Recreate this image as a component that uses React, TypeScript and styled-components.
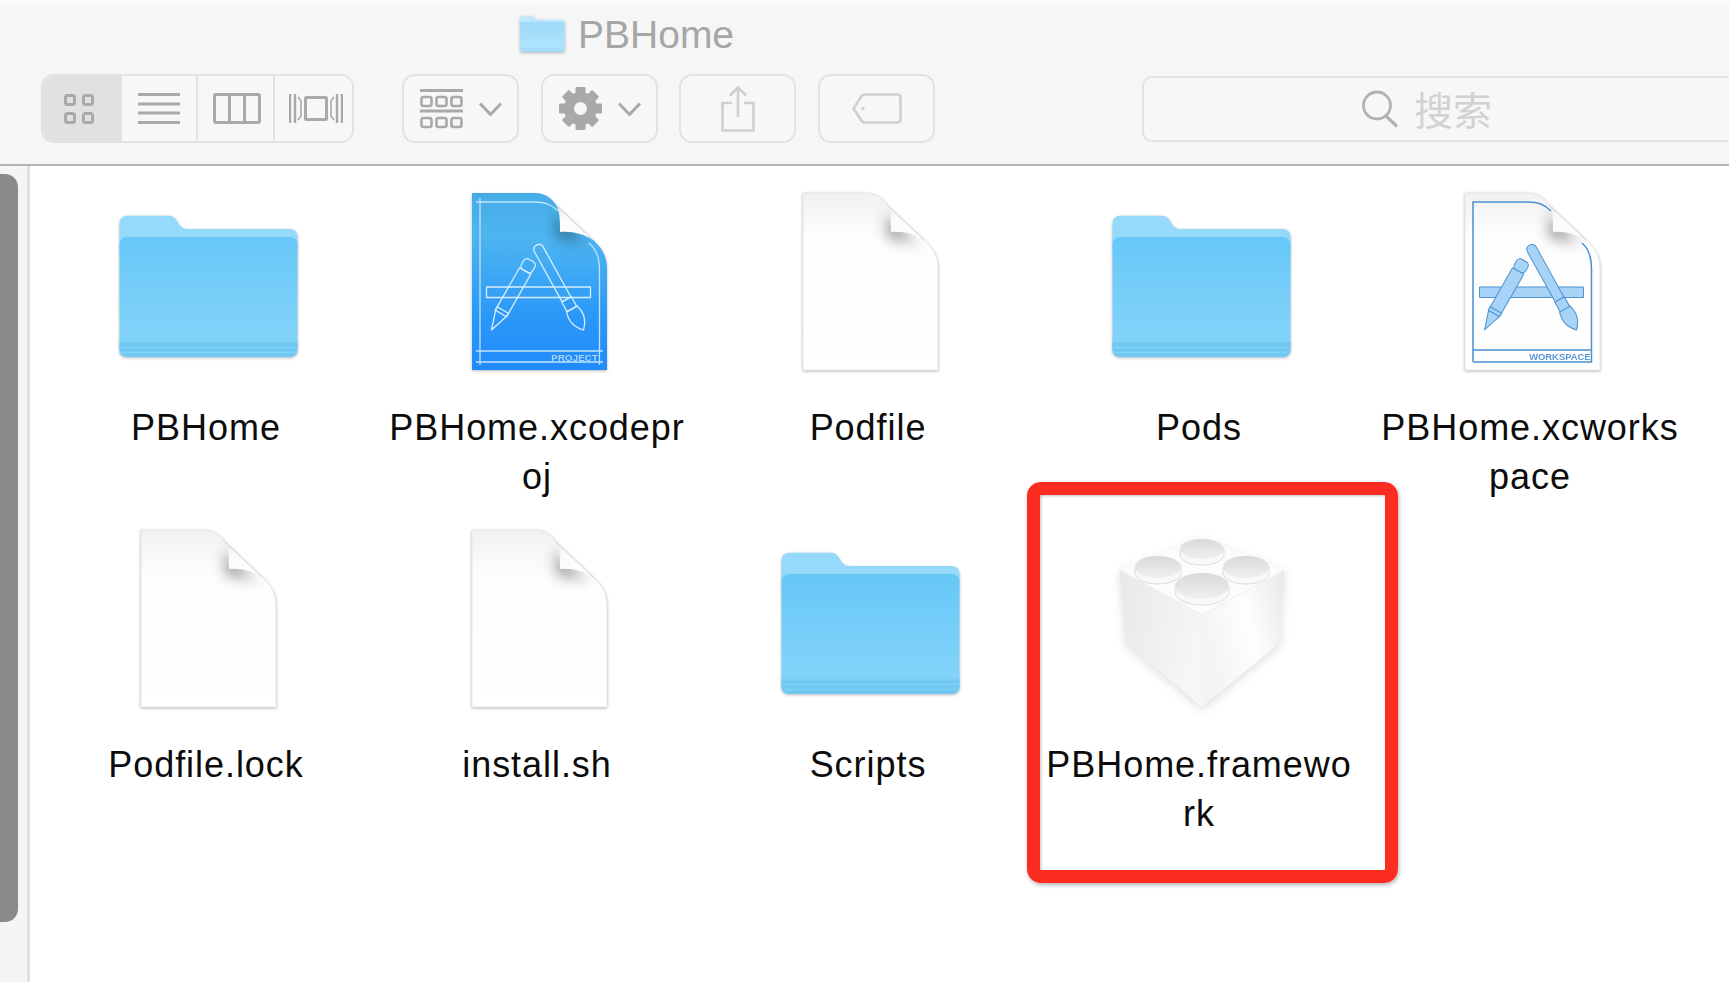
import React from "react";
import styled, { createGlobalStyle } from "styled-components";

const Global = createGlobalStyle`
  html, body { margin: 0; padding: 0; background: #fff; overflow: hidden; }
  * { box-sizing: border-box; }
`;

const Page = styled.div`
  width: 1729px;
  height: 982px;
  display: flex;
  flex-direction: column;
  overflow: hidden;
  font-family: "Liberation Sans", "Noto Sans CJK SC", sans-serif;
  background: #fff;
`;
const Toolbar = styled.header`
  height: 166px;
  flex: none;
  background: #f6f6f6;
  border-top: 3px solid #fbfbfb;
  border-bottom: 2px solid #b4b4b4;
  overflow: hidden;
`;
const TitleRow = styled.div`
  height: 71px;
  display: flex;
  align-items: center;
  gap: 13px;
  padding-left: 520px;
  padding-bottom: 10px;
`;
const Title = styled.div`
  font-size: 39px;
  padding-top: 2px;
  color: #a6a6a6;
`;
const Tools = styled.div`
  display: flex;
  align-items: center;
  padding-left: 41px;
  height: 69px;
`;
const Segmented = styled.div`
  display: flex;
  flex: none;
  width: 313px;
  height: 69px;
  border: 2px solid #e2e2e2;
  border-radius: 13px;
  overflow: hidden;
  margin-right: 48px;
`;
const Segment = styled.div<{ $active?: boolean; $before?: number; $after?: number }>`
  flex: 1 1 0;
  display: flex;
  align-items: center;
  justify-content: center;
  padding-left: ${(p) => p.$before ?? 0}px;
  padding-right: ${(p) => p.$after ?? 0}px;
  background: ${(p) => (p.$active ? "#e1e1e1" : "#f7f7f7")};
  border-right: 2px solid #e2e2e2;
  &:last-child { border-right: none; }
`;
const ToolButton = styled.div<{ $width: number; $gap: number }>`
  width: ${(p) => p.$width}px;
  height: 69px;
  margin-right: ${(p) => p.$gap}px;
  flex: none;
  display: flex;
  align-items: center;
  justify-content: center;
  gap: 16px;
  background: #f7f7f7;
  border: 2px solid #e2e2e2;
  border-radius: 13px;
`;
const SearchField = styled.div`
  flex: none;
  width: 760px;
  height: 66px;
  display: flex;
  align-items: center;
  gap: 14px;
  padding-left: 217px;
  background: #f7f7f7;
  border: 2px solid #e2e2e2;
  border-radius: 10px;
`;
const SearchText = styled.span`
  font-size: 39px;
  line-height: 1;
  color: #d2d2d2;
  font-family: "Noto Sans CJK SC", sans-serif;
`;
const Body = styled.main`
  flex: 1;
  display: flex;
  min-height: 0;
`;
const ScrollTrack = styled.div`
  width: 30px;
  flex: none;
  padding-top: 8px;
  background: #f5f5f5;
  border-right: 3px solid #e0e0e0;
`;
const ScrollThumb = styled.div`
  width: 18px;
  height: 748px;
  background: #8a8a8a;
  border-radius: 0 13px 13px 0;
`;
const Grid = styled.div`
  display: grid;
  grid-template-columns: repeat(5, 331px);
  grid-auto-rows: 337px;
  padding: 27px 0 0 10.5px;
`;
const Cell = styled.div`
  position: relative;
  display: flex;
  flex-direction: column;
  align-items: center;
`;
const IconBox = styled.div`
  width: 180px;
  height: 180px;
  margin-left: 5px;
  flex: none;
  & > svg { display: block; }
`;
const Label = styled.div`
  width: 310px;
  margin-top: 31px;
  font-size: 36px;
  line-height: 48.5px;
  letter-spacing: 0.95px;
  text-align: center;
  color: #0c0c0c;
  word-break: break-all;
`;
const Annotation = styled.div`
  position: absolute;
  left: -6.5px;
  top: -48px;
  width: 371px;
  height: 401px;
  border: 13px solid #fb2c20;
  border-radius: 14px;
  box-shadow: 1px 2px 4px rgba(0, 0, 0, 0.3), inset 1px 1px 3px rgba(0, 0, 0, 0.25);
  pointer-events: none;
`;
const Shadowed = styled.svg`
  overflow: visible;
  filter: drop-shadow(0 1.5px 1.5px rgba(0, 0, 0, 0.28));
`;
const Soft = styled.svg`
  overflow: visible;
  filter: drop-shadow(0 3px 5px rgba(0, 0, 0, 0.13));
`;

const G = "#a9a9a9";

const Folder: React.FC<{ w?: number; h?: number; pale?: boolean }> = ({ w = 180, h = 180, pale }) => {
  const id = pale ? "fp" : "fm";
  return (
    <Shadowed width={w} height={h} viewBox={pale ? "0 22 180 143" : "0 0 180 180"}>
      <defs>
        <linearGradient id={id} x1="0" y1="0" x2="0" y2="1">
          <stop offset="0" stopColor={pale ? "#9edafa" : "#66c7f7"} />
          <stop offset="0.8" stopColor={pale ? "#ade2fc" : "#82d3fa"} />
          <stop offset="1" stopColor={pale ? "#ade2fc" : "#7bd0f8"} />
        </linearGradient>
      </defs>
      <path d="M0.5 31 Q0.5 22.7 9 22.7 H50 Q55 22.7 58 28 Q62 36 68 36 H170 Q178.5 36 178.5 44 V62 H0.5 Z" fill={pale ? "#c0e9fd" : "#95dafb"} />
      <path d="M0.5 52 Q0.5 44 9 44 H170 Q178.5 44 178.5 52 V156 Q178.5 164 170 164 H9 Q0.5 164 0.5 156 Z" fill={`url(#${id})`} />
      <path d="M0.5 149 H178.5 V156 Q178.5 164 170 164 H9 Q0.5 164 0.5 156 Z" fill={pale ? "#a5dcf8" : "#70c8f3"} />
      <path d="M0.5 149 H178.5 M0.5 154.5 H178.5 M0.5 159.5 H178.5" stroke={pale ? "#b4e3fb" : "#82d1f6"} strokeWidth="1.2" />
    </Shadowed>
  );
};

const PAGE = "M22 0 H84 C96 0 102 6 106 12 L143 47 C152 55 157 63 157 76 V177 H22 Z";
const FLAP = "M106 12 C110 18 110 28 110 39 C122 38 134 41 143 47 Z";

const AppTool: React.FC<{ fill: string; stroke: string; sw: number }> = ({ fill, stroke, sw }) => (
  <g fill={fill} stroke={stroke} strokeWidth={sw} strokeLinejoin="round">
    <rect x="36.5" y="94" width="104" height="10.5" />
    <g transform="translate(41.5 137) rotate(29.7)">
      <path d="M0 0 L-6.5 -20 V-68 H6.5 V-20 Z" />
      <rect x="-6.5" y="-23" width="13" height="4" />
      <rect x="-6.5" y="-80" width="13" height="12" rx="4" />
    </g>
    <g transform="translate(133.5 137) rotate(-29)">
      <path d="M0 0 C-7 -7 -9 -15 -6 -24 H6 C9 -15 7 -7 0 0 Z" />
      <rect x="-5.5" y="-35" width="11" height="11" />
      <path d="M-5 -35 V-92 Q-5 -97 0 -97 Q5 -97 5 -92 V-35 Z" />
    </g>
  </g>
);

const Curl: React.FC<{ id: string; strength: number }> = ({ id, strength }) => (
  <>
    <defs>
      <clipPath id={`${id}c`}><path d={PAGE} /></clipPath>
      <filter id={`${id}b`} x="-60%" y="-60%" width="220%" height="220%">
        <feGaussianBlur stdDeviation="7" />
      </filter>
      <linearGradient id={`${id}g`} x1="0" y1="0" x2="1" y2="1">
        <stop offset="0" stopColor="#e6e6e6" />
        <stop offset="0.3" stopColor="#fbfbfb" />
        <stop offset="1" stopColor="#ffffff" />
      </linearGradient>
    </defs>
    <g clipPath={`url(#${id}c)`}>
      <path d={FLAP} transform="translate(-3 7)" fill="#000" opacity={strength} filter={`url(#${id}b)`} />
    </g>
    <path d={FLAP} fill={`url(#${id}g)`} />
    <path d="M106 12 L143 47" stroke="#d2d2d2" strokeWidth="0.9" fill="none" />
  </>
);

const BlankFill: React.FC = () => (
  <defs>
    <linearGradient id="paper" x1="0" y1="0" x2="0" y2="1">
      <stop offset="0" stopColor="#f1f1f1" />
      <stop offset="0.25" stopColor="#fdfdfd" />
      <stop offset="1" stopColor="#ffffff" />
    </linearGradient>
  </defs>
);

const BlankDoc: React.FC = () => (
  <Shadowed width={180} height={180} viewBox="0 0 180 180">
    <BlankFill />
    <path d={PAGE} fill="url(#paper)" stroke="#e4e4e4" strokeWidth="0.8" />
    <Curl id="curlBlank" strength={0.42} />
  </Shadowed>
);

const ProjectDoc: React.FC = () => (
  <Shadowed width={180} height={180} viewBox="0 0 180 180">
    <defs>
      <linearGradient id="proj" x1="0" y1="0" x2="0" y2="1">
        <stop offset="0" stopColor="#46ace8" />
        <stop offset="0.25" stopColor="#4db5f0" />
        <stop offset="0.7" stopColor="#2b98f8" />
        <stop offset="1" stopColor="#218afb" />
      </linearGradient>
    </defs>
    <path d={PAGE} fill="url(#proj)" />
    <Curl id="curlProj" strength={0.4} />
    <g fill="none" stroke="#bfe3fb" strokeWidth="1.3">
      <path d="M30 172 V5 M26 9 H84 C96 9 102 12 108 18 M139 50 C145 55 149.5 63 149.5 76 V172 M26 169 H153 M26 158 H153" />
      <AppTool fill="none" stroke="#d6eefd" sw={1.3} />
    </g>
    <text x="148" y="168" textAnchor="end" fontSize="9.6" letterSpacing="0.2" fontFamily="Liberation Sans, sans-serif" fontWeight="700" fill="#a5d6f9">PROJECT</text>
  </Shadowed>
);

const WorkspaceDoc: React.FC = () => (
  <Shadowed width={180} height={180} viewBox="0 0 180 180">
    <BlankFill />
    <path d={PAGE} fill="url(#paper)" stroke="#e4e4e4" strokeWidth="0.8" />
    <Curl id="curlWork" strength={0.42} />
    <g fill="none" stroke="#4a8fcb" strokeWidth="1.5">
      <path d="M30 169 V9 H84 C96 9 102 12 108 18 M139 50 C145 55 148.5 63 148.5 76 V169 H30 M30 157 H148.5" />
    </g>
    <AppTool fill="#a6d3f6" stroke="#4d93d0" sw={1} />
    <text x="147.5" y="167" textAnchor="end" fontSize="9.4" fontFamily="Liberation Sans, sans-serif" fontWeight="700" fill="#5a9ad2">WORKSPACE</text>
  </Shadowed>
);

const Stud: React.FC<{ cx: number; cy: number; rx: number; ry: number }> = ({ cx, cy, rx, ry }) => (
  <g>
    <path d={`M${cx - rx} ${cy} V${cy + 6} A${rx} ${ry} 0 0 0 ${cx + rx} ${cy + 6} V${cy} Z`} fill="#f8f8f8" stroke="#d8d8d8" strokeWidth="0.9" />
    <ellipse cx={cx} cy={cy} rx={rx} ry={ry} fill="url(#stud)" />
  </g>
);

const Lego: React.FC = () => (
  <Soft width={180} height={180} viewBox="0 0 180 180">
    <defs>
      <linearGradient id="legoL" x1="0" y1="0" x2="1" y2="0.4">
        <stop offset="0" stopColor="#e8e8e8" />
        <stop offset="1" stopColor="#f6f6f6" />
      </linearGradient>
      <linearGradient id="legoR" x1="0" y1="0.4" x2="1" y2="0">
        <stop offset="0" stopColor="#f4f4f4" />
        <stop offset="0.5" stopColor="#fefefe" />
        <stop offset="1" stopColor="#e8e8e8" />
      </linearGradient>
      <linearGradient id="stud" x1="0" y1="0" x2="0" y2="1">
        <stop offset="0" stopColor="#d9d9d9" />
        <stop offset="1" stopColor="#f0f0f0" />
      </linearGradient>
    </defs>
    <path d="M7.5 40 L90 85 V177 L14 113 Z" fill="url(#legoL)" />
    <path d="M172.5 40 L90 85 V177 L167.5 113 Z" fill="url(#legoR)" />
    <path d="M7.5 40 L90 8 L172.5 40 L90 85 Z" fill="#fcfcfc" />
    <path d="M7.5 40 L90 85 L172.5 40" fill="none" stroke="#eeeeee" strokeWidth="0.8" />
    <Stud cx={90} cy={19} rx={22} ry={10} />
    <Stud cx={46} cy={37} rx={23} ry={11} />
    <Stud cx={134} cy={37} rx={23} ry={11} />
    <Stud cx={90} cy={56} rx={27} ry={13} />
  </Soft>
);

const GridViewIcon = () => (
  <svg width="30" height="30" viewBox="0 0 30 30" fill="none" stroke={G} strokeWidth="3">
    <rect x="1.5" y="1.5" width="9" height="9" rx="2" />
    <rect x="19.5" y="1.5" width="9" height="9" rx="2" />
    <rect x="1.5" y="19.5" width="9" height="9" rx="2" />
    <rect x="19.5" y="19.5" width="9" height="9" rx="2" />
  </svg>
);
const ListIcon = () => (
  <svg width="42" height="31" viewBox="0 0 42 31" stroke={G} strokeWidth="3">
    <path d="M0 1.5 H42 M0 11 H42 M0 20 H42 M0 29.5 H42" />
  </svg>
);
const ColumnsIcon = () => (
  <svg width="48" height="31" viewBox="0 0 48 31" fill="none" stroke={G} strokeWidth="3">
    <rect x="1.5" y="1.5" width="45" height="28" rx="1.5" />
    <path d="M16.5 1.5 V29.5 M31.5 1.5 V29.5" />
  </svg>
);
const CoverIcon = () => (
  <svg width="54" height="31" viewBox="0 0 54 31" fill="none" stroke={G} strokeWidth="2.4">
    <path d="M1 1 V30 M6 1 V30 M48 1 V30 M53 1 V30" />
    <path d="M9 4 L12 8 V23 L9 27 M45 4 L42 8 V23 L45 27" strokeWidth="1.6" />
    <rect x="16.5" y="4.5" width="21" height="22" rx="1" strokeWidth="3" />
  </svg>
);
const ArrangeIcon = () => (
  <svg width="43" height="40" viewBox="0 0 43 40" fill="none" stroke={G} strokeWidth="2.6">
    <path d="M0 1.5 H43 M0 22 H43" strokeWidth="3" />
    <rect x="1.5" y="8" width="10" height="9" rx="2" />
    <rect x="16.5" y="8" width="10" height="9" rx="2" />
    <rect x="31.5" y="8" width="10" height="9" rx="2" />
    <rect x="1.5" y="29" width="10" height="9" rx="2" />
    <rect x="16.5" y="29" width="10" height="9" rx="2" />
    <rect x="31.5" y="29" width="10" height="9" rx="2" />
  </svg>
);
const Chevron = () => (
  <svg width="23" height="14" viewBox="0 0 23 14" fill="none" stroke={G} strokeWidth="3">
    <path d="M1 1.5 L11.5 12.5 L22 1.5" />
  </svg>
);
const Gear = () => {
  const teeth = [0, 45, 90, 135, 180, 225, 270, 315];
  return (
    <svg width="43" height="43" viewBox="-21.5 -21.5 43 43">
      {teeth.map((a) => (
        <rect key={a} x="-5" y="-21.5" width="10" height="12" rx="1.2" fill={G} transform={`rotate(${a})`} />
      ))}
      <circle r="11.5" fill="none" stroke={G} strokeWidth="10" />
    </svg>
  );
};
const ShareIcon = () => (
  <svg width="34" height="46" viewBox="0 0 34 46" fill="none" stroke="#cfcfcf" strokeWidth="2.6">
    <path d="M11 17 H1.5 V44.5 H32.5 V17 H23" />
    <path d="M17 1.5 V31 M9 9.5 L17 1.5 L25 9.5" />
  </svg>
);
const TagIcon = () => (
  <svg width="50" height="31" viewBox="0 0 50 31" fill="none" stroke="#cfcfcf" strokeWidth="2.6">
    <path d="M13 1.5 H45 Q48.5 1.5 48.5 5 V26 Q48.5 29.5 45 29.5 H13 Q10.5 29.5 9 27 L1.5 15.5 L9 4 Q10.5 1.5 13 1.5 Z" />
    <circle cx="11" cy="15.5" r="1.6" fill="#cfcfcf" stroke="none" />
  </svg>
);
const SearchIcon = () => (
  <svg width="39" height="38" viewBox="0 0 39 38" fill="none" stroke="#b2b2b2" strokeWidth="2.8">
    <circle cx="16" cy="15.5" r="13.5" />
    <path d="M25 26 L36 36.5" strokeWidth="3.2" />
  </svg>
);

const items: { label: string; icon: React.ReactNode; marked?: boolean }[] = [
  { label: "PBHome", icon: <Folder /> },
  { label: "PBHome.xcodeproj", icon: <ProjectDoc /> },
  { label: "Podfile", icon: <BlankDoc /> },
  { label: "Pods", icon: <Folder /> },
  { label: "PBHome.xcworkspace", icon: <WorkspaceDoc /> },
  { label: "Podfile.lock", icon: <BlankDoc /> },
  { label: "install.sh", icon: <BlankDoc /> },
  { label: "Scripts", icon: <Folder /> },
  { label: "PBHome.framework", icon: <Lego />, marked: true },
];

export default function App() {
  return (
    <Page>
      <Global />
      <Toolbar>
        <TitleRow>
          <Folder w={45} h={36} pale />
          <Title>PBHome</Title>
        </TitleRow>
        <Tools>
          <Segmented>
            <Segment $active $after={4}><GridViewIcon /></Segment>
            <Segment $before={1}><ListIcon /></Segment>
            <Segment $before={3}><ColumnsIcon /></Segment>
            <Segment $before={4}><CoverIcon /></Segment>
          </Segmented>
          <ToolButton $width={117} $gap={22}><ArrangeIcon /><Chevron /></ToolButton>
          <ToolButton $width={117} $gap={21}><Gear /><Chevron /></ToolButton>
          <ToolButton $width={117} $gap={22}><ShareIcon /></ToolButton>
          <ToolButton $width={117} $gap={207}><TagIcon /></ToolButton>
          <SearchField>
            <SearchIcon />
            <SearchText>搜索</SearchText>
          </SearchField>
        </Tools>
      </Toolbar>
      <Body>
        <ScrollTrack><ScrollThumb /></ScrollTrack>
        <Grid>
          {items.map((it) => (
            <Cell key={it.label}>
              <IconBox>{it.icon}</IconBox>
              <Label>{it.label}</Label>
              {it.marked && <Annotation />}
            </Cell>
          ))}
        </Grid>
      </Body>
    </Page>
  );
}
